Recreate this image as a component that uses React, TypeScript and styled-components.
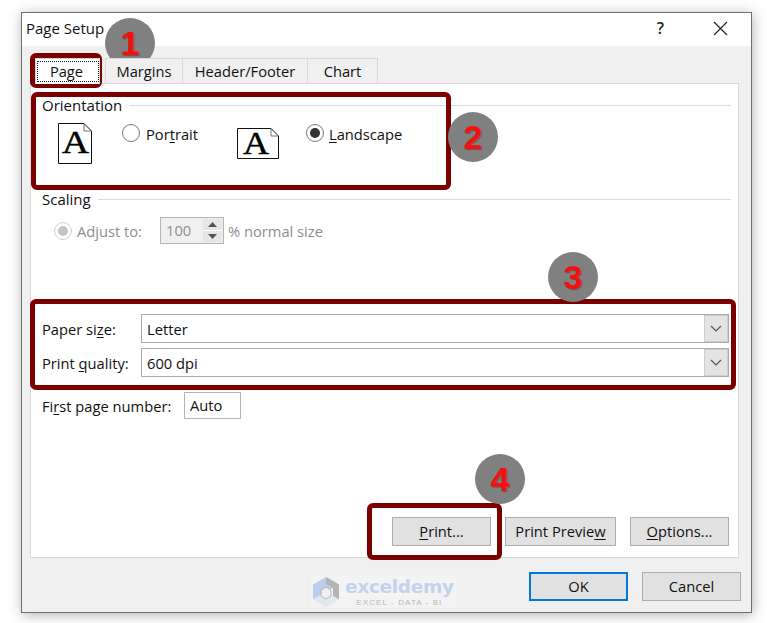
import React from "react"
import styled, { createGlobalStyle } from "styled-components"

const GlobalStyle = createGlobalStyle`
    html, body {
        margin: 0;
        padding: 0;
        background: #fff;
    }
    body {
        font-family: "Open Sans", "Noto Sans", "Liberation Sans", sans-serif;
        font-size: 14.700px;
        color: #111;
    }
`

const Key = ({ children }: { children: string }) => <KeyLetter>{children}</KeyLetter>

const PageIcon = ({ wide }: { wide?: boolean }) => {
    const w = wide ? 42 : 34
    const h = wide ? 31 : 41
    return <PageSvg width={w} height={h} viewBox={`0 0 ${w} ${h}`}>
        <path d={`M0.5 0.5H${w - 8}L${w - 0.5} 8V${h - 0.5}H0.5Z`} fill="#fff" stroke="#111" />
        <path d={`M${w - 8} 0.5V8H${w - 0.5}`} fill="none" stroke="#777" />
        <text
            x={wide ? 6 : 4}
            y={wide ? 26 : 30}
            textLength={wide ? 26 : 27}
            lengthAdjust="spacingAndGlyphs"
            fontFamily="'Liberation Serif', serif"
            fontSize="32"
            stroke="#000"
            strokeWidth="0.500"
            fill="#000"
        >A</text>
    </PageSvg>
}

const LogoMark = () => <svg width="30" height="32" viewBox="0 0 30 32">
    <path d="M15 1L28 8.500L15 16L2 23.500V8.500Z" fill="#bccdee" />
    <path d="M15 1L28 8.500V23.500L22 20V12L15 8Z" fill="#b4b4b4" />
    <path d="M2 23.500L15 16L28 23.500L15 31Z" fill="#dfe8ea" />
    <path d="M15 11L20 14V20L15 23L10 20V14Z" fill="#f0f0f0" stroke="#b8b8b8" />
</svg>

const ComboChevron = () => <svg width="12" height="7" viewBox="0 0 12 7">
    <path d="M1 1L6 6L11 1" fill="none" stroke="#555" strokeWidth="1.200" />
</svg>

export default function App() {
    return <Stage>
        <GlobalStyle />
        <Dialog>
            <TitleBar>
                <Title>Page Setup</Title>
                <TitleControls>
                    <HelpMark>?</HelpMark>
                    <svg width="15" height="15" viewBox="0 0 15 15">
                        <path d="M1 1L14 14M14 1L1 14" stroke="#222" strokeWidth="1.200" />
                    </svg>
                </TitleControls>
            </TitleBar>
            <DialogBody>
                <Tabs>
                    <Tab $active $width={65}><FocusText>Page</FocusText></Tab>
                    <Tab $width={78}>Margins</Tab>
                    <Tab $width={126}>Header/Footer</Tab>
                    <Tab $width={71}>Chart</Tab>
                </Tabs>
                <Panel>
                    <GroupHeader>Orientation</GroupHeader>
                    <OrientationRow>
                        <OrientationOption $width={179}>
                            <IconSlot $width={64}><PageIcon /></IconSlot>
                            <Radio />
                            <OptionLabel>Por<Key>t</Key>rait</OptionLabel>
                        </OrientationOption>
                        <OrientationOption>
                            <IconSlot $width={69} $top={5}><PageIcon wide /></IconSlot>
                            <Radio $checked />
                            <OptionLabel $gap={5}><Key>L</Key>andscape</OptionLabel>
                        </OrientationOption>
                    </OrientationRow>
                    <GroupHeader>Scaling</GroupHeader>
                    <ScalingRow>
                        <Radio $checked $disabled />
                        <DisabledLabel $width={83} $gap={5}>Adjust to:</DisabledLabel>
                        <Spinner>
                            <SpinnerValue>100</SpinnerValue>
                            <SpinnerButtons>
                                <SpinnerButton>
                                    <svg width="9" height="5" viewBox="0 0 9 5"><path d="M4.500 0L9 5H0Z" fill="#555" /></svg>
                                </SpinnerButton>
                                <SpinnerButton>
                                    <svg width="9" height="5" viewBox="0 0 9 5"><path d="M0 0H9L4.500 5Z" fill="#555" /></svg>
                                </SpinnerButton>
                            </SpinnerButtons>
                        </Spinner>
                        <DisabledLabel $gap={4}>% normal size</DisabledLabel>
                    </ScalingRow>
                    <FieldRows>
                        <FieldRow>
                            <FieldLabel>Paper si<Key>z</Key>e:</FieldLabel>
                            <Combo>
                                <ComboValue>Letter</ComboValue>
                                <ComboArrow><ComboChevron /></ComboArrow>
                            </Combo>
                        </FieldRow>
                        <FieldRow>
                            <FieldLabel>Print <Key>q</Key>uality:</FieldLabel>
                            <Combo>
                                <ComboValue>600 dpi</ComboValue>
                                <ComboArrow><ComboChevron /></ComboArrow>
                            </Combo>
                        </FieldRow>
                    </FieldRows>
                    <FirstPageRow>
                        <FirstPageLabel>Fi<Key>r</Key>st page number:</FirstPageLabel>
                        <TextBox>Auto</TextBox>
                    </FirstPageRow>
                    <PanelButtons>
                        <PushButton><Key>P</Key>rint...</PushButton>
                        <PushButton $width={111}>Print Previe<Key>w</Key></PushButton>
                        <PushButton><Key>O</Key>ptions...</PushButton>
                    </PanelButtons>
                </Panel>
                <Footer>
                    <PushButton $default>OK</PushButton>
                    <PushButton>Cancel</PushButton>
                </Footer>
            </DialogBody>
        </Dialog>

        <Watermark>
            <LogoMark />
            <WatermarkText>
                <WatermarkName>exceldemy</WatermarkName>
                <WatermarkTag>EXCEL - DATA - BI</WatermarkTag>
            </WatermarkText>
        </Watermark>

        <Callout $x={30} $y={53} $w={72} $h={35} />
        <Callout $x={31} $y={92} $w={420} $h={98} />
        <Callout $x={30} $y={299} $w={706} $h={91} />
        <Callout $x={367} $y={503} $w={135} $h={57} />

        <Marker $x={130} $y={43}>1</Marker>
        <Marker $x={473} $y={137}>2</Marker>
        <Marker $x={573} $y={277}>3</Marker>
        <Marker $x={500} $y={479}>4</Marker>
    </Stage>
}

const Stage = styled.div`
    position: relative;
    width: 767px;
    height: 623px;
    padding: 12px 15px 10px 21px;
    box-sizing: border-box;
    overflow: hidden;
    background: #fff;
`

const Dialog = styled.div`
    display: flex;
    flex-direction: column;
    height: 100%;
    background: #fff;
    border: 1px solid #6f6f6f;
    box-sizing: border-box;
    box-shadow: 1px 2px 12px rgba(0, 0, 0, 0.3);
`

const TitleBar = styled.div`
    display: flex;
    align-items: center;
    justify-content: space-between;
    height: 33px;
    padding: 0 23px 3px 4px;
    box-sizing: border-box;
    background: #fff;
`

const Title = styled.div`
    font-size: 15px;
    white-space: nowrap;
`

const TitleControls = styled.div`
    display: flex;
    align-items: center;
    gap: 49px;
`

const HelpMark = styled.span`
    font-size: 16px;
    font-weight: 600;
    color: #222;
`

const DialogBody = styled.div`
    flex: 1;
    display: flex;
    flex-direction: column;
    background: #f0f0f0;
    padding: 12px 12px 0 8px;
`

const Tabs = styled.div`
    display: flex;
    align-items: flex-start;
    height: 26px;
    padding-left: 5px;
    position: relative;
    z-index: 1;
`

const Tab = styled.div<{ $active?: boolean; $width: number }>`
    width: ${({ $width }) => $width}px;
    height: 26px;
    box-sizing: border-box;
    display: flex;
    align-items: center;
    justify-content: center;
    border: 1px solid #d9d9d9;
    border-bottom: ${({ $active }) => ($active ? "none" : "1px solid #d9d9d9")};
    background: ${({ $active }) => ($active ? "#fff" : "#f0f0f0")};
    margin-right: ${({ $active }) => ($active ? "6px" : "0")};
    margin-left: ${({ $active }) => ($active ? "0" : "-1px")};
`

const FocusText = styled.span`
    display: block;
    width: 60px;
    padding-right: 2px;
    box-sizing: border-box;
    text-align: center;
    outline: 1px dotted #222;
    line-height: 19px;
`

const Panel = styled.div`
    height: 475px;
    box-sizing: border-box;
    margin-top: -1px;
    display: flex;
    flex-direction: column;
    background: #fff;
    border: 1px solid #d9d9d9;
    padding: 11px 7px 11px 11px;
`

const GroupHeader = styled.div`
    display: flex;
    align-items: center;
    gap: 7px;
    height: 20px;
    font-size: 15px;
    white-space: nowrap;

    &::after {
        content: "";
        flex: 1;
        height: 1px;
        background: #dcdcdc;
    }
`

const OrientationRow = styled.div`
    display: flex;
    height: 74px;
    padding: 8px 0 0 16px;
    box-sizing: border-box;
`

const OrientationOption = styled.div<{ $width?: number }>`
    display: flex;
    align-items: flex-start;
    width: ${({ $width }) => ($width ? `${$width}px` : "auto")};
`

const IconSlot = styled.div<{ $width: number; $top?: number }>`
    width: ${({ $width }) => $width}px;
    padding-top: ${({ $top }) => $top || 0}px;
    line-height: 0;
`

const PageSvg = styled.svg`
    overflow: visible;
`

const Radio = styled.span<{ $checked?: boolean; $disabled?: boolean }>`
    position: relative;
    flex: none;
    display: inline-block;
    width: 18px;
    height: 18px;
    box-sizing: border-box;
    margin-top: 1px;
    border-radius: 50%;
    background: #fff;
    border: 1.500px solid ${({ $disabled }) => ($disabled ? "#cfcfcf" : "#7a7a7a")};

    &::after {
        content: "";
        display: ${({ $checked }) => ($checked ? "block" : "none")};
        position: absolute;
        inset: 3px;
        border-radius: 50%;
        background: ${({ $disabled }) => ($disabled ? "#c4c4c4" : "#333")};
    }
`

const OptionLabel = styled.span<{ $gap?: number }>`
    margin-left: ${({ $gap }) => $gap || 6}px;
    margin-top: 2px;
    line-height: 18px;
    white-space: nowrap;
`

const KeyLetter = styled.span`
    text-decoration: underline;
    text-underline-offset: 2px;
`

const ScalingRow = styled.div`
    display: flex;
    align-items: center;
    height: 27px;
    margin-top: 8px;
    padding-left: 12px;
`

const DisabledLabel = styled.span<{ $width?: number; $gap: number }>`
    color: #8e8e8e;
    margin-left: ${({ $gap }) => $gap}px;
    width: ${({ $width }) => ($width ? `${$width}px` : "auto")};
    white-space: nowrap;
`

const Spinner = styled.div`
    display: flex;
    width: 64px;
    height: 27px;
    box-sizing: border-box;
    border: 1px solid #b4b4b4;
    background: #f0f0f0;
    color: #8e8e8e;
    padding: 1px;
`

const SpinnerValue = styled.div`
    flex: 1;
    padding-left: 4px;
    line-height: 23px;
    background: #f0f0f0;
`

const SpinnerButtons = styled.div`
    width: 19px;
    display: flex;
    flex-direction: column;
    gap: 1px;
    background: #fff;
`

const SpinnerButton = styled.div`
    flex: 1;
    display: flex;
    align-items: center;
    justify-content: center;
    background: #e6e6e6;
`

const FieldRows = styled.div`
    display: flex;
    flex-direction: column;
    gap: 5px;
    margin: 70px 2px 0 0;
`

const FieldRow = styled.div`
    display: flex;
    align-items: center;
`

const FieldLabel = styled.span`
    width: 99px;
    flex: none;
    white-space: nowrap;
`

const Combo = styled.div`
    flex: 1;
    display: flex;
    height: 29px;
    box-sizing: border-box;
    border: 1px solid #ababab;
    background: #fff;
`

const ComboValue = styled.div`
    flex: 1;
    display: flex;
    align-items: center;
    padding-left: 5px;
`

const ComboArrow = styled.div`
    width: 22px;
    display: flex;
    align-items: center;
    justify-content: center;
    background: #e3e3e3;
    border: 1px solid #cdcdcd;
`

const FirstPageRow = styled.div`
    display: flex;
    align-items: center;
    margin-top: 15px;
    white-space: nowrap;
`

const FirstPageLabel = styled.span`
    width: 142px;
    flex: none;
`

const TextBox = styled.div`
    width: 57px;
    height: 27px;
    box-sizing: border-box;
    border: 1px solid #b4b4b4;
    padding-left: 5px;
    line-height: 25px;
`

const PanelButtons = styled.div`
    display: flex;
    justify-content: flex-end;
    gap: 14px;
    margin-top: auto;
    padding-right: 2px;
`

const PushButton = styled.div<{ $width?: number; $default?: boolean }>`
    width: ${({ $width }) => $width || 99}px;
    height: 29px;
    box-sizing: border-box;
    display: flex;
    align-items: center;
    justify-content: center;
    padding-bottom: 2px;
    background: #e1e1e1;
    border: ${({ $default }) => ($default ? "2px solid #0078d7" : "1px solid #adadad")};
    white-space: nowrap;
`

const Footer = styled.div`
    display: flex;
    justify-content: flex-end;
    gap: 14px;
    margin-top: 14px;
    margin-right: -2px;
`

const Watermark = styled.div`
    position: absolute;
    left: 311px;
    top: 576px;
    display: flex;
    gap: 4px;
    padding-right: 2px;
    background: rgba(255, 255, 255, 0.2);
    pointer-events: none;
`

const WatermarkText = styled.div`
    display: flex;
    flex-direction: column;
    align-items: center;
`

const WatermarkName = styled.div`
    font-family: "DejaVu Sans", sans-serif;
    font-weight: 700;
    font-size: 18.500px;
    line-height: 22px;
    letter-spacing: -0.300px;
    color: #c3d2ee;
`

const WatermarkTag = styled.div`
    font-family: "Liberation Sans", sans-serif;
    font-size: 8px;
    line-height: 9px;
    letter-spacing: 1.100px;
    color: #b8b8b8;
`

const Callout = styled.div<{ $x: number; $y: number; $w: number; $h: number }>`
    position: absolute;
    left: ${({ $x }) => $x}px;
    top: ${({ $y }) => $y}px;
    width: ${({ $w }) => $w}px;
    height: ${({ $h }) => $h}px;
    box-sizing: border-box;
    border: 5px solid #7b0000;
    border-radius: 6px;
    pointer-events: none;
`

const Marker = styled.div<{ $x: number; $y: number }>`
    position: absolute;
    left: ${({ $x }) => $x - 25}px;
    top: ${({ $y }) => $y - 25}px;
    width: 50px;
    height: 50px;
    display: flex;
    align-items: center;
    justify-content: center;
    border-radius: 50%;
    background: #808080;
    color: #f50f0f;
    font-family: "Liberation Sans", sans-serif;
    font-weight: 700;
    font-size: 34px;
    text-shadow: 1px 1px 1px rgba(60, 0, 0, 0.35);
`
